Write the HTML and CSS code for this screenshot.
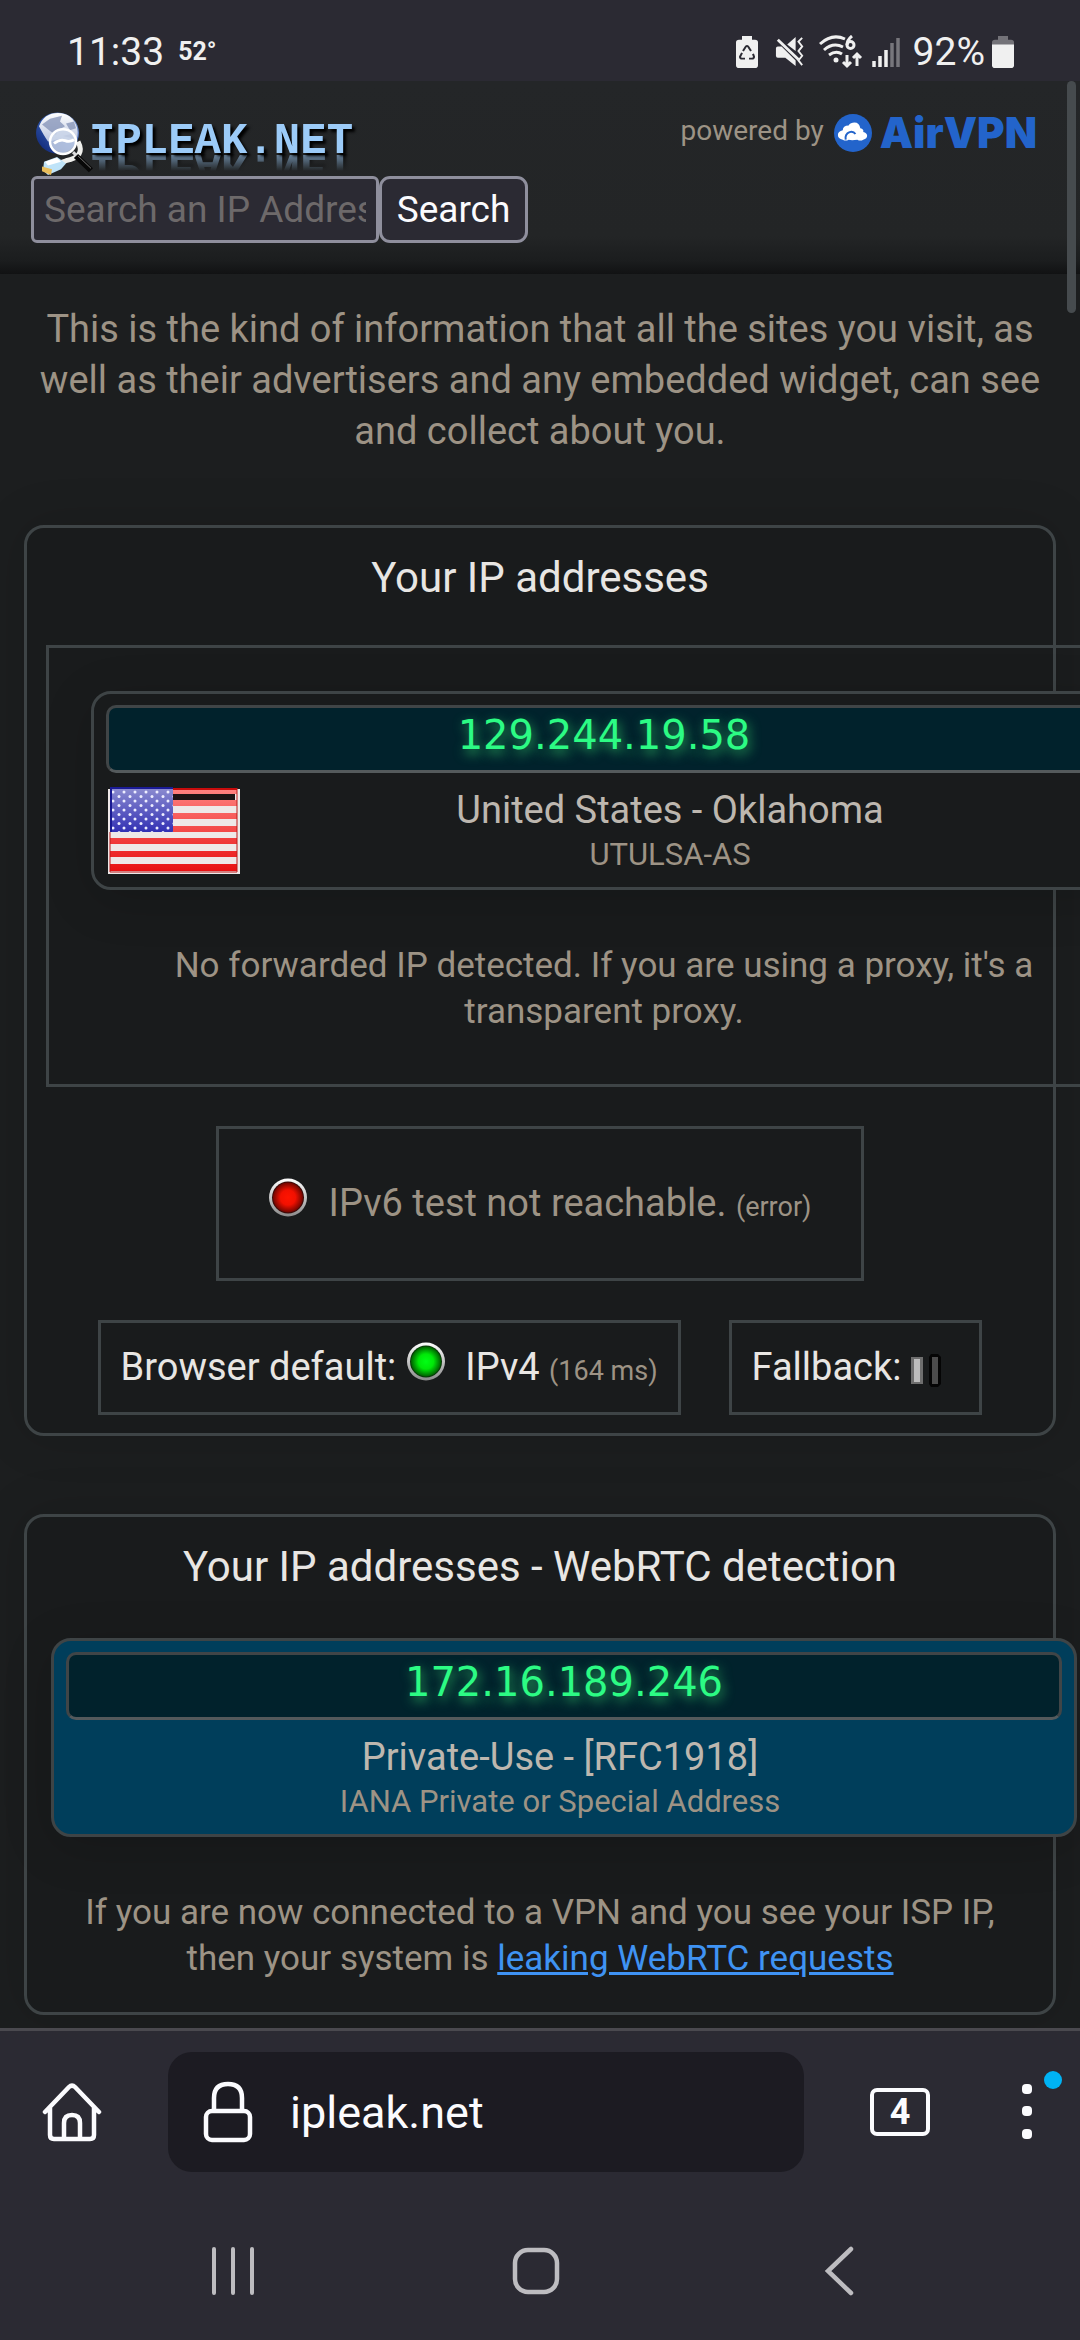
FILE: index.html
```html
<!DOCTYPE html>
<html lang="en">
<head>
<meta charset="utf-8">
<meta name="viewport" content="width=device-width, initial-scale=1">
<title>ipleak.net</title>
<link rel="stylesheet" href="styles.css">
</head>
<body>
<div class="screen">
  <div class="status-bar">
    <span class="clock">11:33</span>
    <span class="temperature">52°</span>
    <div class="status-icons">
      <svg class="icon-saver" width="22" height="32" viewBox="0 0 22 34" preserveAspectRatio="none"><path d="M6 0h10v4h3q3 0 3 3v24q0 3-3 3H3q-3 0-3-3V7q0-3 3-3h3z" fill="#f0f0f0"/><g fill="none" stroke="#2b2a33" stroke-width="2"><path d="M7 16l3-5q1-1 2 0l3 5"/><path d="M17 19l1 3q0 2-2 2h-3"/><path d="M9 24H6q-2 0-2-2l2-4"/></g></svg>
      <svg class="icon-mute" width="30" height="30" viewBox="0 0 30 32"><path d="M0 12q0-2 2-2h4l15 15v6L10 22H2q-2 0-2-2zM12 8l9-8v15z" fill="#f0f0f0"/><path d="M2 3l22 21" stroke="#f0f0f0" stroke-width="3"/><path d="M28 1l-4 4 4 5-4 5 4 5-4 5 4 5" fill="none" stroke="#f0f0f0" stroke-width="2"/></svg>
      <svg class="icon-wifi" width="44" height="34" viewBox="0 0 44 34"><g fill="none" stroke="#f0f0f0" stroke-width="3"><path d="M1 9Q13-2 26 4"/><path d="M5 15q9-8 19-3"/><path d="M10 20q7-5 13-1"/><path d="M33 1q-5 4-5 9"/><circle cx="31.500" cy="10" r="3.500"/><path d="M28 20v11M24 27l4 4 4-4M38 31V19M34 23l4-4 4 4"/></g><circle cx="17" cy="25" r="2.500" fill="#f0f0f0"/></svg>
      <svg class="icon-signal" width="28" height="32" viewBox="0 0 28 32"><path d="M2 31v-6M8 31V20M14 31V14" stroke="#f0f0f0" stroke-width="3.500"/><path d="M20 31V7M26 31V2" stroke="#77767c" stroke-width="3.500"/></svg>
      <span class="charge">92%</span>
      <svg class="icon-battery" width="22" height="32" viewBox="0 0 22 34" preserveAspectRatio="none"><path d="M6 0h10v4h3q3 0 3 3v3H0V7q0-3 3-3h3z" fill="#737278"/><path d="M0 9h22v22q0 3-3 3H3q-3 0-3-3z" fill="#f0f0f0"/></svg>
    </div>
  </div>

  <main class="page">
    <div class="scroll-thumb"></div>
    <header class="site-header">
      <div class="brand-row">
        <a class="brand" href="#">
          <svg class="brand-globe" width="57" height="64" viewBox="0 0 57 67" preserveAspectRatio="none">
            <defs>
              <linearGradient id="ocean" x1="1" y1="0" x2="0" y2="1"><stop offset="0" stop-color="#8ea6d6"/><stop offset=".5" stop-color="#3158ac"/><stop offset="1" stop-color="#0b1f6e"/></linearGradient>
              <linearGradient id="shine" x1="0" y1="0" x2="0" y2="1"><stop offset="0" stop-color="#fff"/><stop offset="1" stop-color="#b8c3de"/></linearGradient>
            </defs>
            <circle cx="21.500" cy="22" r="21.500" fill="url(#ocean)"/>
            <path d="M3 15Q8 1 22 1t19 15q2 10-2 16l-14-4-13 3Q8 25 3 15z" fill="url(#shine)"/>
            <path d="M6 13l8-6 12-3-2 6 5 5-7 4-2 5-6-4zM30 12l8-2 2 7-6 2zM27 25l8-2 3 5z" fill="#8190b5" opacity=".75"/>
            <path d="M42 31q8 16-12 20l-14 5" fill="none" stroke="#efefec" stroke-width="5"/>
            <circle cx="27" cy="31" r="13" fill="#cbd6e9" fill-opacity=".82" stroke="#fff" stroke-width="2.500"/>
            <path d="M18 33q6-5 11-3t9-1" fill="none" stroke="#fff" stroke-width="3"/>
            <path d="M37 42l4 4" stroke="#ddd" stroke-width="3"/>
            <path d="M40 46l15 15" stroke="#080808" stroke-width="6"/>
            <path d="M42 46l13 13" stroke="#777" stroke-width="1"/>
            <path d="M8 52l13-5 9 7-5 6-13 6-5-5z" fill="#bfe3f8"/>
            <path d="M9 52l12-4 4 4-13 4z" fill="#fff"/>
            <path d="M6 57l10 3-1 6-9-4z" fill="#e9bd5a"/>
          </svg>
          <span class="brand-name">IPLEAK.NET</span>
        </a>
        <div class="sponsor">
          <span class="powered">powered by</span>
          <a class="airvpn" href="#">
            <svg class="airvpn-mark" width="38" height="38" viewBox="0 0 39 40" preserveAspectRatio="none"><ellipse cx="19.500" cy="20" rx="19.500" ry="20" fill="#2364cb"/><path d="M9 27q-5-1-5-5t5-5q0-5 6-5 2-3 6-3 5 0 6 6 4 1 3 4 4 1 4 4 0 3-4 4-3 2-6 0-6 1-9-0-3 2-6 0z" fill="#fff"/><path d="M12 27q-1-6 4-8 4-1 6 2" fill="none" stroke="#2364cb" stroke-width="2"/></svg>
            <span class="airvpn-name">AirVPN</span>
          </a>
        </div>
      </div>
      <form class="search">
        <input class="search-field" type="text" placeholder="Search an IP Address" aria-label="Search an IP Address">
        <button class="search-button" type="button">Search</button>
      </form>
    </header>

    <p class="intro">This is the kind of information that all the sites you visit, as well as their advertisers and any embedded widget, can see and collect about you.</p>

    <section class="card">
      <h2 class="card-title">Your IP addresses</h2>
      <div class="frame frame-wide">
        <div class="ip-box">
          <div class="ip-number">129.244.19.58</div>
          <div class="ip-details">
            <svg class="flag" width="132" height="87" viewBox="0 0 132 87">
              <defs>
                <pattern id="stars" width="11" height="9" patternUnits="userSpaceOnUse" x="2" y="2"><circle cx="3" cy="3" r="1.500" fill="#eef"/><circle cx="9" cy="7.500" r="1.500" fill="#eef"/></pattern>
                <linearGradient id="canton" x1="0" y1="0" x2="0" y2="1"><stop offset="0" stop-color="#8c8cd0"/><stop offset="1" stop-color="#3230b4"/></linearGradient>
                <linearGradient id="red" gradientUnits="userSpaceOnUse" x1="0" y1="0" x2="0" y2="87"><stop offset="0" stop-color="#ff8583"/><stop offset="1" stop-color="#e80c0e"/></linearGradient>
              </defs>
              <path d="M0 2h132v85H0z" fill="#eee8e8"/>
              <path d="M65 7h62v6H65z" fill="#1c1415"/>
              <path d="M65 1h64v6H65zM65 13h64v6H65zM65 26h64v6H65zM65 39h64v6H65zM2 51h127v6H2zM2 64h127v6H2zM2 77h127v7H2z" fill="url(#red)"/>
              <path d="M65 1h64v2H65z" fill="#c80c0c"/>
              <path d="M2 1h63v44H2z" fill="url(#canton)"/><path d="M2 1h63v44H2z" fill="url(#stars)"/>
              <path d="M3 45V1h62" fill="none" stroke="#1a1a94" stroke-width="2"/>
              <path d="M129 1v84H2V45" fill="none" stroke="#b91b1b" stroke-width="1"/>
            </svg>
            <div class="ip-text">
              <div class="ip-place">United States - Oklahoma</div>
              <div class="ip-owner">UTULSA-AS</div>
            </div>
          </div>
        </div>
        <p class="note">No forwarded IP detected. If you are using a proxy, it's a transparent proxy.</p>
      </div>
      <div class="frame frame-ipv6">
        <svg class="led" width="38" height="39" viewBox="0 0 38 39"><defs><linearGradient id="rim" x1="0" y1="0" x2="0" y2="1"><stop offset="0" stop-color="#fff"/><stop offset="1" stop-color="#8a8a8a"/></linearGradient><radialGradient id="redLamp"><stop offset="0" stop-color="#ff1400"/><stop offset=".5" stop-color="#f21000"/><stop offset="1" stop-color="#700500"/></radialGradient></defs><circle cx="19" cy="19.500" r="19" fill="url(#rim)"/><circle cx="19" cy="19.500" r="16" fill="#3a0a08"/><circle cx="19" cy="19.500" r="15" fill="url(#redLamp)"/></svg>
        <span>IPv6 test not reachable. <small>(error)</small></span>
      </div>
      <div class="frame-row">
        <div class="frame frame-small">
          <span>Browser default:</span>
          <svg class="led led-inline" width="38" height="39" viewBox="0 0 38 39"><defs><radialGradient id="greenLamp"><stop offset="0" stop-color="#00ff14"/><stop offset=".5" stop-color="#00e808"/><stop offset="1" stop-color="#006000"/></radialGradient></defs><circle cx="19" cy="19.500" r="19" fill="url(#rim)"/><circle cx="19" cy="19.500" r="16" fill="#083a08"/><circle cx="19" cy="19.500" r="15" fill="url(#greenLamp)"/></svg>
          <span>IPv4 <small>(164 ms)</small></span>
        </div>
        <div class="frame frame-small">
          <span>Fallback:</span>
          <svg class="loader" width="48" height="34" viewBox="0 0 48 34"><path d="M0 3h12v27H0z" fill="#6e6e6e"/><path d="M3 5h6v23H3z" fill="#bdbdbd"/><path d="M20 0h7l3 3v27l-3 3h-7l-2-3V3z" fill="#050505"/><path d="M21 3h6v27h-6z" fill="#4c4c4c"/></svg>
        </div>
      </div>
    </section>

    <section class="card card-webrtc">
      <h2 class="card-title">Your IP addresses - WebRTC detection</h2>
      <div class="ip-box ip-box-private">
        <div class="ip-number">172.16.189.246</div>
        <div class="ip-details">
          <div class="ip-text">
            <div class="ip-place">Private-Use - [RFC1918]</div>
            <div class="ip-owner">IANA Private or Special Address</div>
          </div>
        </div>
      </div>
      <p class="note">If you are now connected to a VPN and you see your ISP IP,<br>then your system is <a class="note-link" href="#">leaking WebRTC requests</a></p>
    </section>
  </main>

  <div class="browser-bar">
    <button class="bar-button" type="button" aria-label="Home">
      <svg width="60" height="60" viewBox="0 0 60 60" fill="none" stroke="#fbfbfe" stroke-width="4.500" stroke-linecap="round" stroke-linejoin="round"><path d="M3 30L27 5q3-3 6 0l24 25M8 26v27q0 4 4 4h36q4 0 4-4V26M22 57V41q0-8 8-8t8 8v16"/></svg>
    </button>
    <div class="address">
      <svg width="50" height="62" viewBox="0 0 50 62" fill="none" stroke="#fbfbfe" stroke-width="4.500"><rect x="3" y="30" width="44" height="29" rx="6"/><path d="M11 30V17Q11 3 25 3t14 14v13"/></svg>
      <input class="address-field" type="text" value="ipleak.net" aria-label="Address">
    </div>
    <button class="tab-count" type="button" aria-label="4 open tabs">4</button>
    <button class="bar-button menu-button" type="button" aria-label="Menu">
      <svg width="10" height="56" viewBox="0 0 10 56" fill="#fbfbfe"><rect width="10" height="10" y="0" rx="4"/><rect width="10" height="10" y="22" rx="4"/><rect width="10" height="10" y="45" rx="4"/></svg>
      <span class="menu-badge"></span>
    </button>
  </div>
  <nav class="system-nav">
    <button class="nav-button" type="button" aria-label="Recent apps"><svg width="44" height="48" viewBox="0 0 44 48"><path d="M3 2v44M22 2v44M41 2v44" stroke="#bdbcc0" stroke-width="4" stroke-linecap="round"/></svg></button>
    <button class="nav-button" type="button" aria-label="Home screen"><svg width="48" height="48" viewBox="0 0 48 48"><rect x="3" y="3" width="42" height="42" rx="13" fill="none" stroke="#bdbcc0" stroke-width="4.500"/></svg></button>
    <button class="nav-button" type="button" aria-label="Back"><svg width="30" height="50" viewBox="0 0 30 50"><path d="M27 3L4 25l23 22" fill="none" stroke="#bdbcc0" stroke-width="4.500" stroke-linecap="round"/></svg></button>
  </nav>
</div>
</body>
</html>
```
FILE: styles.css
```css
* {
  box-sizing: border-box;
}

body {
  margin: 0;
  background: #1c1e1f;
  color: #e8e6e3;
  font-family: Roboto, "Liberation Sans", sans-serif;
}

svg {
  display: block;
  flex: none;
}

button,
input {
  margin: 0;
  font-family: inherit;
  color: inherit;
}

.screen {
  display: flex;
  flex-direction: column;
  min-height: 100vh;
}

/* Phone status bar */
.status-bar {
  display: flex;
  align-items: center;
  height: 81px;
  padding: 23px 66px 0 67px;
  background: #2b2a33;
  color: #f0f0f0;
  font-size: 39px;
  line-height: 48px;
}

.temperature {
  margin-left: 14px;
  font-size: 25px;
  font-weight: 700;
}

.status-icons {
  display: flex;
  align-items: center;
  margin-left: auto;
}

.icon-mute {
  margin-left: 17px;
}

.icon-wifi {
  margin-left: 14px;
}

.icon-signal {
  margin-left: 9px;
}

.charge {
  margin-left: 13px;
}

.icon-battery {
  margin-left: 7px;
}

/* Page */
.page {
  position: relative;
  flex: 1;
  padding-bottom: 12px;
  overflow: hidden;
}

.scroll-thumb {
  position: absolute;
  top: 0;
  right: 4px;
  width: 9px;
  height: 232px;
  border-radius: 5px;
  background: #464b4e;
}

.site-header {
  height: 193px;
  padding: 31px 43px 0 31px;
  background: linear-gradient(#242628 0, #232526 155px, #1b1d1e 180px, #111213 193px);
}

.brand-row {
  display: flex;
  justify-content: space-between;
  height: 64px;
}

.brand {
  display: flex;
  padding-left: 5px;
  color: #9ccbf8;
  text-decoration: none;
}

.brand-name {
  height: 26px;
  margin: 16px 0 0 -4px;
  font: 700 44px/26px "Liberation Mono", monospace;
  text-shadow: 3px 3px 3px #000;
  -webkit-box-reflect: below 0 linear-gradient(transparent 35%, rgba(0, 0, 0, 0.6));
}

.sponsor {
  display: flex;
  height: 42px;
  align-items: center;
}

.powered {
  padding-bottom: 5px;
  color: #9d9385;
  font-size: 28px;
}

.airvpn {
  display: flex;
  align-items: center;
  gap: 8px;
  margin-left: 10px;
  color: #2364cb;
  text-decoration: none;
}

.airvpn-name {
  font: 900 42px/42px Inter, sans-serif;
}

.search {
  display: flex;
}

.search-field {
  width: 348px;
  height: 67px;
  padding: 0 10px;
  border: 3px solid #8f8f9d;
  border-radius: 6px;
  background: #2b2a33;
  font-size: 37px;
}

.search-field::placeholder {
  color: #6d696a;
}

.search-button {
  width: 149px;
  height: 67px;
  padding: 0;
  border: 3px solid #8f8f9d;
  border-radius: 11px;
  background: #2b2a33;
  color: #fbfbfe;
  font-size: 37px;
}

.intro {
  margin: 0;
  padding: 30px 24px 68px;
  color: #9d9385;
  font-size: 38px;
  line-height: 51px;
  text-align: center;
}

/* Cards */
.card {
  margin: 0 24px;
  padding: 25px 19px 18px;
  border: 3px solid #3e4446;
  border-radius: 20px;
  background: #191b1c;
  box-shadow: 0 0 50px rgba(0, 0, 0, 0.15);
}

.card-webrtc {
  margin-top: 78px;
  padding-bottom: 30px;
}

.card-title {
  margin: 0;
  font-size: 42px;
  font-weight: 400;
  line-height: 50px;
  text-align: center;
}

.frame {
  border: 3px solid #3e4446;
  font-size: 38px;
  line-height: 50px;
}

.frame small {
  color: #9d9385;
  font-size: 27px;
  line-height: 27px;
}

/* The address table is wider than the card and runs off its right edge */
.frame-wide {
  margin: 42px -128px 0 0;
  padding: 43px 42px 49px;
}

.ip-box {
  padding: 11px 12px 10px;
  border: 3px solid #3e4446;
  border-radius: 20px;
  background: #191b1c;
  box-shadow: 0 10px 50px rgba(0, 0, 0, 0.15);
}

.ip-box-private {
  margin: 46px -43px 0 5px;
  background: #003e5b;
}

.ip-number {
  padding-bottom: 8px;
  border: 3px solid #404547;
  border-bottom-color: #545a5c;
  border-radius: 10px;
  background: #01222c;
  color: #2cfb84;
  font: 40px/54px "DejaVu Sans", sans-serif;
  text-align: center;
  text-shadow: 2px 4px 12px #2cb060;
}

.ip-details {
  display: flex;
  padding: 14px 2px 0;
}

.ip-box-private .ip-details {
  padding-right: 10px;
}

.ip-text {
  flex: 1;
  text-align: center;
}

.ip-place {
  color: #bdb7af;
  font-size: 38px;
  line-height: 46px;
}

.ip-owner {
  color: #9d9385;
  font-size: 31px;
  line-height: 44px;
}

.note {
  margin: 0;
  padding: 53px 24px 0;
  color: #9d9385;
  font-size: 35px;
  line-height: 46px;
  text-align: center;
}

.frame-wide .note {
  padding: 53px 80px 0;
}

.note-link {
  color: #3f93f3;
}

.frame-ipv6 {
  display: flex;
  width: fit-content;
  gap: 22px;
  margin: 39px auto 0;
  padding: 49px 50px 50px;
  color: #9d9385;
}

.frame-row {
  display: flex;
  justify-content: center;
  gap: 48px;
  margin-top: 39px;
}

.frame-small {
  display: flex;
  padding: 19px 20px 20px;
}

.led-inline {
  margin: 0 20px 0 11px;
}

.loader {
  margin: 12px 0 0 10px;
}

/* Browser toolbar */
.browser-bar {
  display: flex;
  align-items: center;
  padding: 21px 48px 0 42px;
  border-top: 3px solid #4a494f;
  background: #2b2a33;
  color: #fbfbfe;
}

.bar-button,
.nav-button {
  display: flex;
  flex: none;
  justify-content: center;
  padding: 0;
  border: 0;
  background: none;
}

.address {
  display: flex;
  flex: 1;
  align-items: center;
  gap: 37px;
  min-width: 0;
  height: 120px;
  margin: 0 66px;
  padding: 0 35px;
  border-radius: 24px;
  background: #1c1b22;
}

.address-field {
  flex: 1;
  min-width: 0;
  padding: 0;
  border: 0;
  background: none;
  font-size: 45px;
}

.tab-count {
  flex: none;
  width: 60px;
  height: 48px;
  padding: 0;
  border: 4px solid #fbfbfe;
  border-radius: 7px;
  background: none;
  font-size: 36px;
  font-weight: 700;
  line-height: 40px;
}

.menu-button {
  position: relative;
  margin-left: 92px;
}

.menu-badge {
  position: absolute;
  top: -13px;
  left: 22px;
  width: 18px;
  height: 18px;
  border-radius: 50%;
  background: #00b3f4;
}

.system-nav {
  display: grid;
  grid-template-columns: repeat(3, 1fr);
  align-items: center;
  height: 168px;
  padding: 30px 90px 0 82px;
  background: #2b2a33;
}
```
